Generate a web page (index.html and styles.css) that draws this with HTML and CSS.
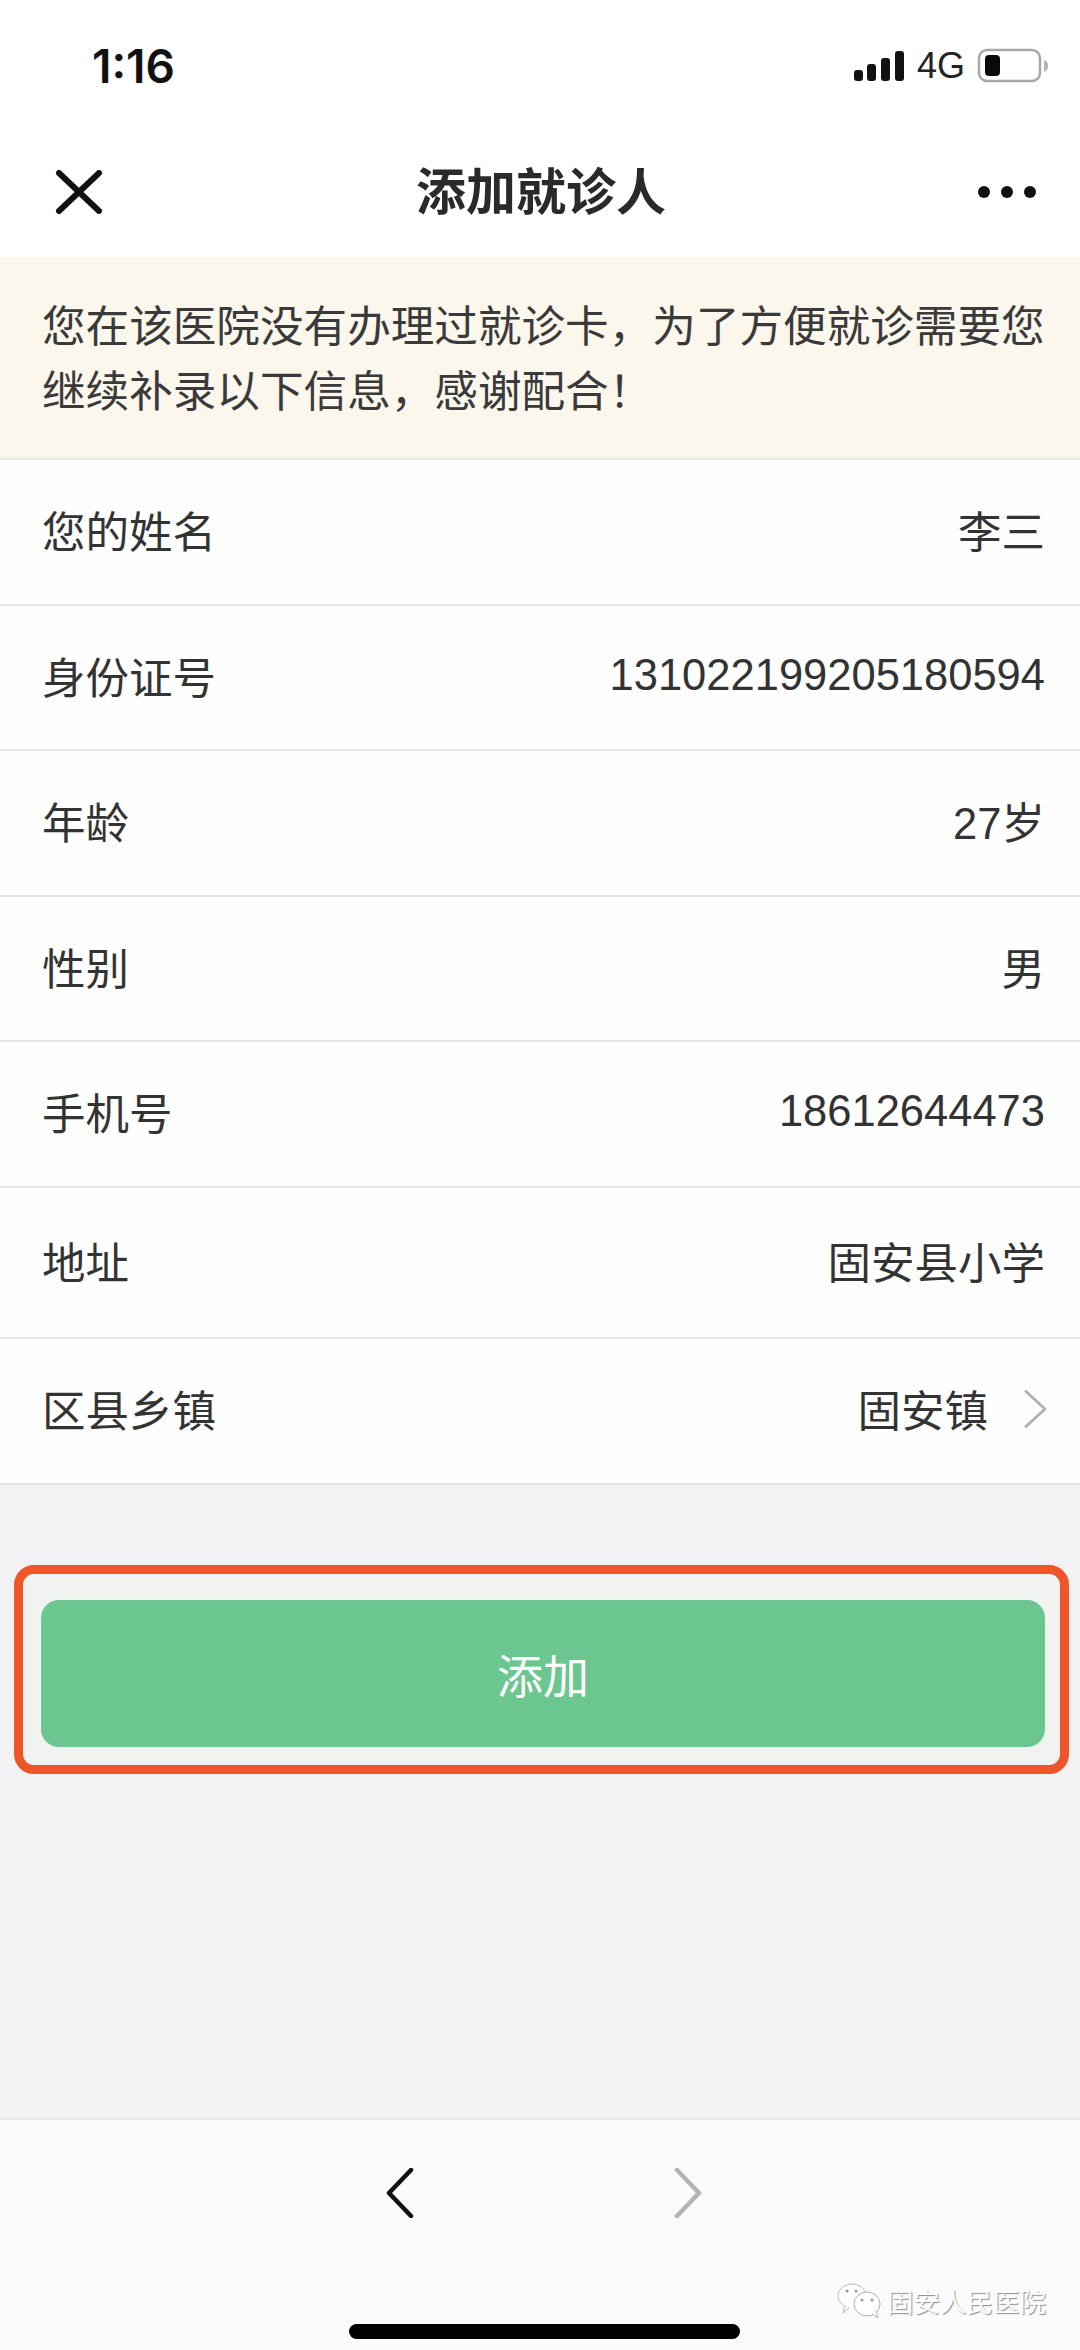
FILE: index.html
```html
<!DOCTYPE html>
<html lang="zh-CN">
<head>
    <meta charset="UTF-8">
    <meta name="viewport" content="width=device-width, initial-scale=1.0">
    <title>添加就诊人</title>
    <link rel="stylesheet" href="styles.css">
</head>
<body>

<!-- Status bar -->
<div class="status-bar">
    <span class="status-time">1:16</span>
    <div class="status-right">
        <svg class="signal" width="52" height="32" viewBox="0 0 52 32">
            <rect x="1" y="20" width="9" height="11" rx="3"/>
            <rect x="14" y="14" width="9" height="17" rx="3"/>
            <rect x="28" y="8" width="9" height="23" rx="3"/>
            <rect x="42" y="1" width="9" height="30" rx="3"/>
        </svg>
        <span class="status-net">4G</span>
        <svg class="battery" width="72" height="36" viewBox="0 0 72 36">
            <rect x="2" y="2" width="61" height="31" rx="8" fill="none" stroke="#a8a8a8" stroke-width="2.5"/>
            <rect x="8" y="7" width="15" height="21" rx="4" fill="#0a0a0a"/>
            <path d="M67 12c3 1 4 3 4 6s-1 5-4 6z" fill="#b4b4b4"/>
        </svg>
    </div>
</div>

<!-- Nav -->
<div class="nav">
    <svg class="nav-close" width="50" height="44" viewBox="0 0 50 44">
        <path d="M5 3L45 41M45 3L5 41" fill="none" stroke="#111" stroke-width="6" stroke-linecap="round"/>
    </svg>
    <h1 class="nav-title">添加就诊人</h1>
    <div class="nav-more"><i></i><i></i><i></i></div>
</div>

<p class="notice">您在该医院没有办理过就诊卡，为了方便就诊需要您继续补录以下信息，感谢配合！</p>

<div class="form">
    <div class="row row-first"><span>您的姓名</span><span>李三</span></div>
    <div class="row"><span>身份证号</span><span>131022199205180594</span></div>
    <div class="row row-first"><span>年龄</span><span>27岁</span></div>
    <div class="row"><span>性别</span><span>男</span></div>
    <div class="row row-first"><span>手机号</span><span>18612644473</span></div>
    <div class="row row-tall"><span>地址</span><span>固安县小学</span></div>
    <div class="row row-first">
        <span>区县乡镇</span>
        <span class="row-value">固安镇
            <svg width="24" height="38" viewBox="0 0 24 38">
                <path d="M2 1.500L21 19L2 36.500" fill="none" stroke="#b2b2b2" stroke-width="3" stroke-linecap="round" stroke-linejoin="round"/>
            </svg>
        </span>
    </div>
</div>

<div class="main">
    <div class="highlight">
        <button class="add-button">添加</button>
    </div>
</div>

<!-- Bottom toolbar -->
<div class="toolbar">
    <div class="toolbar-arrows">
        <svg width="28" height="50" viewBox="0 0 28 50">
            <path d="M25 2L3 25L25 48" fill="none" stroke="#111" stroke-width="4.500" stroke-linecap="round" stroke-linejoin="round"/>
        </svg>
        <svg width="28" height="50" viewBox="0 0 28 50">
            <path d="M3 2L25 25L3 48" fill="none" stroke="#b4b4b4" stroke-width="4.500" stroke-linecap="round" stroke-linejoin="round"/>
        </svg>
    </div>
    <div class="home-bar"></div>
    <div class="watermark">
        <svg width="46" height="36" viewBox="0 0 46 36">
            <path d="M13 25C6 23 2 18 2 13C2 6 9 1 16 1C22 1 27 4 29 9" fill="#fff" stroke="#b8b8b8" stroke-width="1"/>
            <path d="M13 25L7 30L9 23" fill="#fff" stroke="#b8b8b8" stroke-width="1"/>
            <ellipse cx="31" cy="21" rx="13" ry="12" fill="#fff" stroke="#b0b0b0" stroke-width="1"/>
            <path d="M36 31L42 35L40 28" fill="#fff" stroke="#b0b0b0" stroke-width="1"/>
            <circle cx="11" cy="8" r="1.500" fill="#999"/>
            <circle cx="20" cy="8" r="1.500" fill="#999"/>
            <circle cx="26" cy="17" r="1.500" fill="#999"/>
            <circle cx="36" cy="17" r="1.500" fill="#999"/>
        </svg>
        <span>固安人民医院</span>
    </div>
</div>

</body>
</html>
```

FILE: styles.css
```css
* {
    box-sizing: border-box;
}

html, body {
    margin: 0;
    padding: 0;
}

body {
    width: 1080px;
    height: 2350px;
    display: flex;
    flex-direction: column;
    font-family: 'Liberation Sans', 'Noto Sans CJK SC', sans-serif;
    background-color: #f2f1f3;
    color: #333;
    overflow: hidden;
}

.status-bar {
    height: 132px;
    flex-shrink: 0;
    display: flex;
    justify-content: space-between;
    align-items: center;
    padding: 0 31px 0 92px;
    background-color: #fff;
}

.status-time {
    font-family: Inter, sans-serif;
    font-size: 46px;
    font-weight: 600;
    color: #111;
}

.status-right {
    display: flex;
    align-items: center;
    gap: 12px;
}

.signal {
    fill: #111;
}

.status-net {
    font-size: 36px;
    color: #222;
}

.nav {
    height: 125px;
    flex-shrink: 0;
    display: flex;
    justify-content: space-between;
    align-items: center;
    padding: 0 44px 5px 54px;
    background-color: #fff;
}

.nav-title {
    margin: 0 0 8px;
    font-size: 50px;
    font-weight: 700;
    color: #2a2a2a;
}

.nav-more {
    display: flex;
    gap: 11px;
}

.nav-more i {
    width: 12px;
    height: 12px;
    border-radius: 50%;
    background-color: #111;
}

.notice {
    margin: 0;
    height: 203px;
    flex-shrink: 0;
    padding: 38px 30px 0 42px;
    font-size: 43.600px;
    line-height: 65px;
    background-color: #fbf7ed;
    border-bottom: 2px solid #ebe9e6;
    color: #3a3a3a;
}

.form {
    flex-shrink: 0;
    background-color: #fefefe;
}

.row {
    height: 145px;
    display: flex;
    justify-content: space-between;
    align-items: center;
    padding: 0 35px 5px 42px;
    font-size: 43.500px;
    border-bottom: 2px solid #e5e5e7;
}

.row-first {
    height: 146px;
}

.row-tall {
    height: 151px;
}

.row-value {
    display: flex;
    align-items: center;
    gap: 36px;
    margin-right: -3px;
}

.main {
    flex: 1;
    padding: 80px 11px 0 14px;
}

.highlight {
    padding: 26px 15px 18px 18px;
    border: 9px solid #ee5629;
    border-radius: 20px;
    background-color: #f1f3f1;
}

.add-button {
    display: block;
    width: 100%;
    height: 147px;
    padding: 0 0 2px;
    border: none;
    border-radius: 18px;
    font-family: inherit;
    font-size: 46px;
    color: #fff;
    background-color: #6bc690;
}

.toolbar {
    position: relative;
    height: 232px;
    flex-shrink: 0;
    padding-top: 48px;
    border-top: 2px solid #e6e5e8;
    background-color: #fbfbfd;
}

.toolbar-arrows {
    display: flex;
    justify-content: center;
    gap: 260px;
    padding-left: 8px;
}

.home-bar {
    width: 391px;
    height: 15px;
    margin: 106px 0 0 349px;
    border-radius: 8px;
    background-color: #000;
}

/* sits over the bar, pasted on the screenshot */
.watermark {
    position: absolute;
    right: 34px;
    bottom: 30px;
    display: flex;
    align-items: center;
    gap: 5px;
    font-size: 26.500px;
    color: #fff;
    text-shadow: 1px 1px 1px #8c8c8c;
}
```
